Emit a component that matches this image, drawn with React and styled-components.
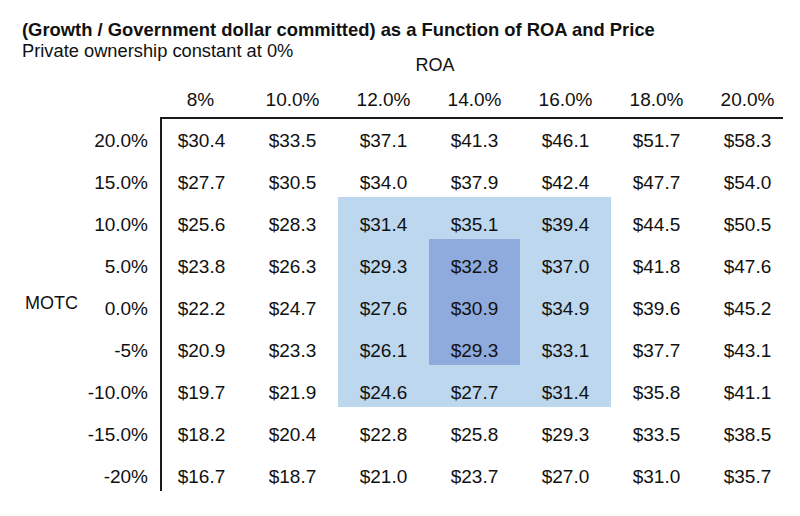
import React from "react";
import styled, { createGlobalStyle } from "styled-components";

const GlobalStyle = createGlobalStyle`
  html, body {
    margin: 0;
    padding: 0;
    background: #ffffff;
  }
  body {
    font-family: "Liberation Sans", Arial, sans-serif;
    color: #111111;
  }
`;

const Page = styled.div`
  width: 800px;
  height: 516px;
  overflow: hidden;
  background: #ffffff;
`;

const Title = styled.h1`
  margin: 0;
  padding: 19px 0 0 22px;
  font-size: 18.4px;
  line-height: 22px;
  font-weight: bold;
  color: #111111;
`;

const Subtitle = styled.div`
  padding-left: 22px;
  font-size: 18.3px;
  line-height: 19px;
`;

const Table = styled.div`
  display: grid;
  grid-template-columns: 80px 76px repeat(7, 91px);
  grid-template-rows: 13px 46px 36px repeat(8, 42px);
  font-size: 19px;
`;

const AxisTitle = styled.div`
  grid-column: 1 / -1;
  grid-row: 1;
  text-align: center;
  padding-left: 77px;
  font-size: 18px;
  line-height: 10px;
`;

const SideTitle = styled.div`
  grid-column: 1;
  grid-row: 3 / 12;
  align-self: center;
  padding-left: 25px;
  font-size: 18px;
  line-height: 20px;
  margin-top: -4px;
`;

const HeadCell = styled.div`
  grid-row: 2;
  grid-column: ${(p) => p.col};
  box-sizing: border-box;
  display: flex;
  align-items: flex-end;
  justify-content: center;
  line-height: 20px;
  padding-bottom: 7px;
  border-bottom: 2px solid #1a1a1a;
  margin-left: ${(p) => (p.first ? "4px" : "0")};
  padding-right: ${(p) => (p.first ? "6px" : "0")};
  margin-right: ${(p) => (p.last ? "10px" : "0")};
  padding-left: ${(p) => (p.last ? "10px" : "0")};
`;

const RowLabel = styled.div`
  grid-column: 2;
  grid-row: ${(p) => p.row};
  display: flex;
  align-items: flex-end;
  justify-content: flex-end;
  padding: 0 8px 4px 0;
  line-height: 20px;
`;

const tones = {
  none: "transparent",
  light: "#bdd7ee",
  dark: "#8faadc",
};

const Cell = styled.div`
  grid-row: ${(p) => p.row};
  grid-column: ${(p) => p.col};
  display: flex;
  align-items: flex-end;
  justify-content: center;
  padding-bottom: 4px;
  line-height: 20px;
  background: ${(p) => tones[p.tone]};
  margin-left: ${(p) => (p.first ? "4px" : "0")};
  padding-right: ${(p) => (p.first ? "6px" : "0")};
  border-left: ${(p) => (p.first ? "2px solid #1a1a1a" : "none")};
`;

const roa = ["8%", "10.0%", "12.0%", "14.0%", "16.0%", "18.0%", "20.0%"];

const rows = [
  ["20.0%", [30.4, 33.5, 37.1, 41.3, 46.1, 51.7, 58.3]],
  ["15.0%", [27.7, 30.5, 34.0, 37.9, 42.4, 47.7, 54.0]],
  ["10.0%", [25.6, 28.3, 31.4, 35.1, 39.4, 44.5, 50.5]],
  ["5.0%", [23.8, 26.3, 29.3, 32.8, 37.0, 41.8, 47.6]],
  ["0.0%", [22.2, 24.7, 27.6, 30.9, 34.9, 39.6, 45.2]],
  ["-5%", [20.9, 23.3, 26.1, 29.3, 33.1, 37.7, 43.1]],
  ["-10.0%", [19.7, 21.9, 24.6, 27.7, 31.4, 35.8, 41.1]],
  ["-15.0%", [18.2, 20.4, 22.8, 25.8, 29.3, 33.5, 38.5]],
  ["-20%", [16.7, 18.7, 21.0, 23.7, 27.0, 31.0, 35.7]],
];

// rows 2..6 / cols 2..4 shaded light, rows 3..5 / col 3 shaded dark
const toneFor = (r, c) => {
  if (r >= 3 && r <= 5 && c === 3) return "dark";
  if (r >= 2 && r <= 6 && c >= 2 && c <= 4) return "light";
  return "none";
};

const App = () => {
  return (
    <Page>
      <GlobalStyle />
      <Title>
        (Growth / Government dollar committed) as a Function of ROA and Price
      </Title>
      <Subtitle>Private ownership constant at 0%</Subtitle>
      <Table>
        <AxisTitle>ROA</AxisTitle>
        <SideTitle>MOTC</SideTitle>
        {roa.map((h, i) => (
          <HeadCell key={h} col={i + 3} first={i === 0} last={i === roa.length - 1}>
            {h}
          </HeadCell>
        ))}
        {rows.map(([label, values], r) => (
          <React.Fragment key={label}>
            <RowLabel row={r + 3}>{label}</RowLabel>
            {values.map((v, c) => (
              <Cell key={c} row={r + 3} col={c + 3} first={c === 0} tone={toneFor(r, c)}>
                ${v.toFixed(1)}
              </Cell>
            ))}
          </React.Fragment>
        ))}
      </Table>
    </Page>
  );
};

export default App;
